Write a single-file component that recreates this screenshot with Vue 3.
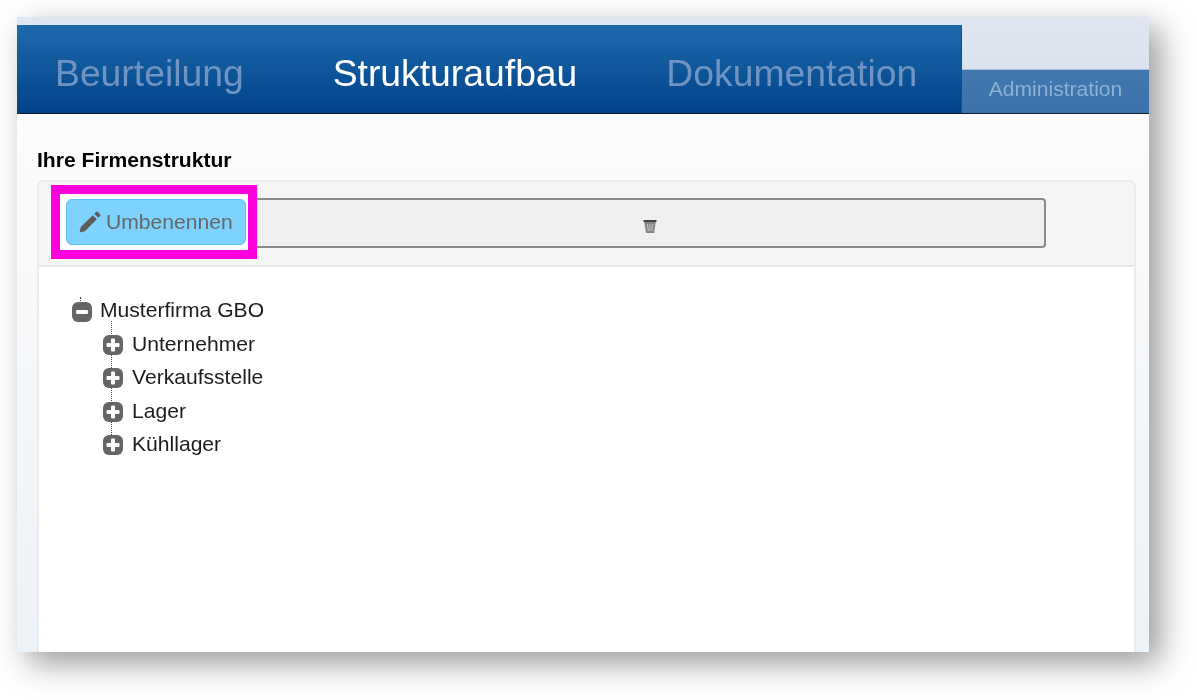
<script setup>
const tabs = [
  { label: 'Beurteilung', active: false },
  { label: 'Strukturaufbau', active: true },
  { label: 'Dokumentation', active: false },
]
const children = ['Unternehmer', 'Verkaufsstelle', 'Lager', 'Kühllager']
</script>

<template>
  <div class="page">
    <div class="window">
      <header class="top">
        <nav class="tabs">
          <a v-for="t in tabs" :key="t.label" class="tab" :class="{ active: t.active }">{{ t.label }}</a>
        </nav>
        <div class="side">
          <div class="admin">Administration</div>
        </div>
      </header>
      <main class="content">
        <h2 class="title">Ihre Firmenstruktur</h2>
        <section class="panel">
          <div class="toolbar">
            <div class="highlight"></div>
            <button class="btn-rename">
              <svg class="pencil" viewBox="0 0 24 24" width="24" height="24">
                <path d="M1.5 22.5l1.3-5.4L14.8 5.2l4 4L6.9 21.2z" fill="#5c5c5c" />
                <path d="M16.2 3.8l1.9-1.9a1.2 1.2 0 0 1 1.7 0l2.3 2.3a1.2 1.2 0 0 1 0 1.7l-1.9 1.9z" fill="#5c5c5c" />
              </svg>
              <span>Umbenennen</span>
            </button>
            <div class="bar">
              <svg class="trash" viewBox="0 0 14 15" width="14" height="15">
                <path d="M1 1.5h12l-2 12.5H3z" fill="#858585" />
                <path d="M0.5 1h13v2h-13z" fill="#444" />
                <path d="M4.5 5l.8 7M7 5v7M9.5 5l-.8 7" stroke="#c8c8c8" stroke-width="1" fill="none" />
              </svg>
            </div>
          </div>
          <div class="tree">
            <div class="node root">
              <span class="dots root-dots"></span>
              <svg class="toggle" viewBox="0 0 20 20" width="20" height="20">
                <rect width="20" height="20" rx="6" fill="#656565" />
                <rect x="4" y="8" width="12" height="4" rx="1" fill="#fff" />
              </svg>
              <span class="label">Musterfirma GBO</span>
            </div>
            <div class="branch">
              <div v-for="c in children" :key="c" class="node child">
                <span class="dots"></span>
                <svg class="toggle" viewBox="0 0 20 20" width="20" height="20">
                  <rect width="20" height="20" rx="6" fill="#656565" />
                  <rect x="3.5" y="8" width="13" height="4" rx="1" fill="#fff" />
                  <rect x="8" y="3.5" width="4" height="13" rx="1" fill="#fff" />
                </svg>
                <span class="label">{{ c }}</span>
              </div>
            </div>
          </div>
        </section>
      </main>
    </div>
  </div>
</template>

<style>
html, body { margin: 0; background: #fff; }
</style>

<style scoped>
.page {
  height: 700px;
  box-sizing: border-box;
  padding: 17px 48px 48px 17px;
  overflow: hidden;
  font-family: "Liberation Sans", Arial, sans-serif;
}
.window {
  height: 635px;
  display: flex;
  flex-direction: column;
  overflow: hidden;
  background: #fff;
  box-shadow: 11px 11px 30px rgba(0, 0, 0, 0.4);
}
.top, .content { filter: blur(0.4px); }
.top {
  display: flex;
  height: 97px;
  flex: none;
  background: linear-gradient(#e0e7f2, #d4dfeb);
  border-bottom: 1px solid #0f1a2a;
  box-sizing: border-box;
}
.tabs {
  width: 945px;
  margin-top: 8px;
  display: flex;
  align-items: center;
  box-sizing: border-box;
  background: linear-gradient(#1e6aac, #004289);
  border-right: 1px solid #0d5097;
}
.tab {
  font-size: 37.3px;
  color: #6f94c4;
  padding-top: 8px;
  margin-left: 38px;
  white-space: nowrap;
}
.tab.active { color: #fff; margin-left: 89px; }
.tab:last-child { margin-left: 89px; }
.side {
  flex: 1;
  display: flex;
  align-items: flex-end;
}
.admin {
  width: 100%;
  height: 44px;
  box-sizing: border-box;
  background: linear-gradient(#4277b0, #3c72ab);
  border-top: 1px solid #a9c1da;
  color: #8cb2d6;
  font-size: 21.1px;
  line-height: 38px;
  text-align: center;
}
.content {
  flex: 1;
  min-height: 0;
  padding: 34px 13px 0 20px;
  background: linear-gradient(#fcfcfc, #edf2f7);
}
.title {
  margin: 0 0 8px;
  font-size: 21.1px;
  line-height: 24px;
  font-weight: 700;
  color: #000;
}
.panel {
  height: 700px;
  box-sizing: border-box;
  background: #fff;
  border: 2px solid #ebebeb;
  border-radius: 7px 7px 0 0;
}
.toolbar {
  position: relative;
  height: 85px;
  box-sizing: border-box;
  padding: 16px 0 0 27px;
  display: flex;
  background: #f5f5f5;
  border-bottom: 2px solid #e8e8e8;
  border-radius: 6px 6px 0 0;
}
.btn-rename {
  position: relative;
  z-index: 2;
  width: 180px;
  height: 46px;
  margin-top: 1px;
  padding: 0 0 0 11px;
  display: flex;
  align-items: center;
  gap: 4px;
  background: #7dd3fe;
  border: 1px solid #5dc0f4;
  border-radius: 6px;
  color: #666;
  font: 21.1px "Liberation Sans", Arial, sans-serif;
  flex: none;
}
.bar {
  width: 806px;
  margin-left: -6px;
  height: 50px;
  box-sizing: border-box;
  background: #efefef;
  border: 2px solid #8a8a8a;
  border-radius: 4px;
  display: flex;
  align-items: center;
  justify-content: center;
  padding: 6px 0 0 14px;
}
.highlight {
  position: absolute;
  left: 12px;
  top: 3px;
  width: 206px;
  height: 74px;
  box-sizing: border-box;
  border: 9px solid #ff00dc;
  background: #fff;
  z-index: 1;
}
.tree {
  padding: 28px 0 0 33px;
}
.node {
  position: relative;
  display: flex;
  align-items: center;
  height: 33.4px;
}
.toggle { flex: none; position: relative; }
.label {
  margin-left: 8px;
  font-size: 21.1px;
  color: #1c1c1c;
  padding-bottom: 4px;
}
.child .label { margin-left: 9px; padding-bottom: 2px; }
.branch { margin-left: 31px; }
.dots {
  position: absolute;
  left: 8px;
  top: -7px;
  height: 15px;
  border-left: 1px dotted #444;
}
.root-dots { top: 2px; height: 6px; }
</style>
